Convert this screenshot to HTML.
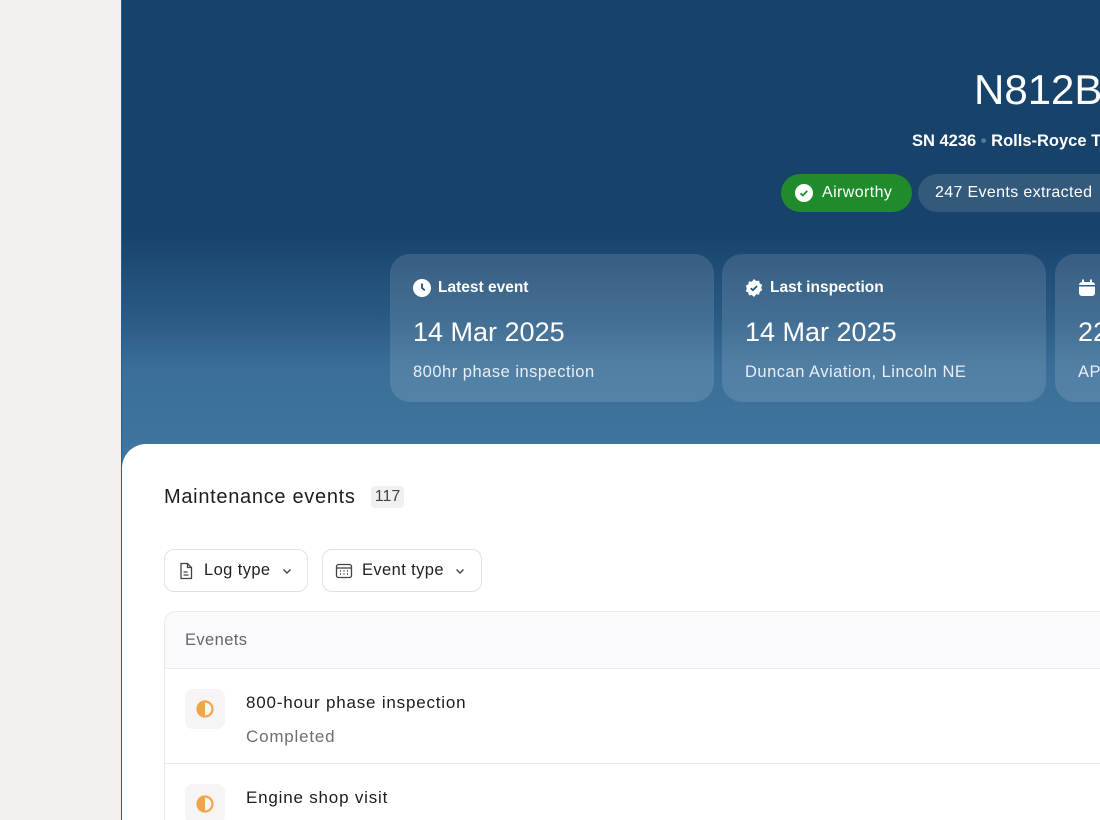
<!DOCTYPE html>
<html style="overflow:hidden"><head><style>
*{margin:0;padding:0;box-sizing:border-box}
html,body{width:1100px;height:820px;overflow:hidden}
body{position:relative;background:#f3efee;font-family:"Liberation Sans",sans-serif}
.hero{position:absolute;left:121px;top:0;width:979px;height:820px;background:linear-gradient(180deg,#17426a 0px,#17426a 230px,#2a5b85 320px,#3b6f99 370px,#3e749d 445px);border-left:1px solid #2a5e8e;overflow:hidden}
.t{position:absolute;color:#fff;white-space:nowrap}
.card{position:absolute;top:254px;height:148px;width:324px;border-radius:20px;background:rgba(255,255,255,0.12)}
.card .h{position:absolute;left:23px;top:25px;font-size:15.5px;font-weight:bold;color:#fff;display:flex;align-items:center;gap:7px}
.card .d{position:absolute;left:23px;top:63px;font-size:27px;color:#fff}
.card .s{position:absolute;left:23px;top:109px;font-size:16.5px;color:#e8eef5;letter-spacing:0.5px}
.main{position:absolute;left:122px;top:444px;width:978px;height:376px;background:#fff;border-top-left-radius:24px;overflow:hidden}
.btn{position:absolute;top:105px;height:43px;border:1px solid #e2e1e6;border-radius:10px;display:flex;align-items:center;font-size:16.5px;color:#222;letter-spacing:0.4px}
.tbl{position:absolute;left:42px;top:167px;width:960px;height:300px;border:1px solid #ebeaee;border-radius:12px;overflow:hidden}
.row{position:absolute;left:0;width:100%;height:96px;border-top:1px solid #ebeaee}
.ic{position:absolute;left:20px;top:20px;width:40px;height:40px;border-radius:8px;background:#f6f4f4;display:flex;align-items:center;justify-content:center}
.rt{position:absolute;left:81px;font-size:17px;letter-spacing:0.8px}
</style></head><body>
<div class="hero">
<div class="t" style="left:852px;top:66px;font-size:42px">N812BA</div>
<div class="t" style="left:790px;top:132px;font-size:16.5px;font-weight:bold">SN 4236 <span style="color:#5d7a95">•</span> Rolls-Royce T</div>
<div class="t" style="left:659px;top:174px;width:131px;height:38px;border-radius:19px;background:#1f8b2b;font-size:16px;letter-spacing:0.4px;display:flex;align-items:center;padding-left:14px;gap:9px">
<svg width="18" height="18" viewBox="0 0 18 18"><circle cx="9" cy="9" r="9" fill="#fff"/><path d="M5.5 9.3l2.3 2.2 4.5-4.6" stroke="#1f8b2b" stroke-width="1.8" fill="none"/></svg>Airworthy</div>
<div class="t" style="left:796px;top:174px;width:200px;height:38px;border-radius:19px;background:rgba(255,255,255,0.12);font-size:16px;letter-spacing:0.35px;display:flex;align-items:center;padding-left:17px">247 Events extracted</div>
<div class="card" style="left:268px"><div class="h"><svg width="18" height="18" viewBox="0 0 18 18"><circle cx="9" cy="9" r="9" fill="#fff"/><path d="M9 4.5V9l2.8 2.3" stroke="#23507a" stroke-width="1.8" fill="none"/></svg>Latest event</div><div class="d">14 Mar 2025</div><div class="s">800hr phase inspection</div></div>
<div class="card" style="left:600px"><div class="h"><svg width="18" height="18" viewBox="0 0 18 18"><path d="M9 0l2.2 2 2.9-.4.6 2.9 2.6 1.4-1.2 2.7 1.2 2.7-2.6 1.4-.6 2.9-2.9-.4L9 18l-2.2-2-2.9.4-.6-2.9L.7 12.1 1.9 9.4.7 6.7l2.6-1.4.6-2.9 2.9.4z" fill="#fff"/><path d="M5.8 9.2l2.2 2 4-4.2" stroke="#23507a" stroke-width="1.7" fill="none"/></svg>Last inspection</div><div class="d">14 Mar 2025</div><div class="s">Duncan Aviation, Lincoln NE</div></div>
<div class="card" style="left:933px"><div class="h"><svg width="18" height="18" viewBox="0 0 18 18"><rect x="1" y="3" width="16" height="14" rx="3" fill="#fff"/><rect x="4" y="0.5" width="2" height="4" fill="#fff"/><rect x="12" y="0.5" width="2" height="4" fill="#fff"/><rect x="1" y="6" width="16" height="1.5" fill="#2b5a84"/></svg>Next due</div><div class="d">22 Jun 2025</div><div class="s">APU inspection</div></div>
</div>
<div class="main">
<div style="position:absolute;left:42px;top:42px;font-size:20px;color:#1d1d1f;letter-spacing:0.7px">Maintenance events</div>
<div style="position:absolute;left:249px;top:42px;width:33px;height:22px;background:#f0eff1;border-radius:4px;font-size:16px;color:#444;text-align:center;line-height:22px">117</div>
<div class="btn" style="left:42px;width:144px;padding-left:12px">
<svg width="18" height="18" viewBox="0 0 18 18" fill="none" stroke="#444" stroke-width="1.3"><path d="M4 1.5h6.5L14.5 5.5V16.5H4z"/><path d="M10.5 1.5v4h4M6.5 10h4M6.5 13h5"/></svg>
<span style="margin-left:9px">Log type</span><svg style="margin-left:10px" width="12" height="12" viewBox="0 0 12 12"><path d="M2.5 4.5l3.5 3.5 3.5-3.5" stroke="#444" stroke-width="1.4" fill="none"/></svg></div>
<div class="btn" style="left:200px;width:160px;padding-left:12px">
<svg width="18" height="18" viewBox="0 0 18 18" fill="none" stroke="#444" stroke-width="1.3"><rect x="1.5" y="2.5" width="15" height="13" rx="2"/><path d="M1.5 6h15"/><path d="M5 9h1M8.5 9h1M12 9h1M5 12h1M8.5 12h1M12 12h1" stroke-width="1.5"/></svg>
<span style="margin-left:9px">Event type</span><svg style="margin-left:10px" width="12" height="12" viewBox="0 0 12 12"><path d="M2.5 4.5l3.5 3.5 3.5-3.5" stroke="#444" stroke-width="1.4" fill="none"/></svg></div>
<div class="tbl">
<div style="position:absolute;left:0;top:0;width:100%;height:56px;background:#faf9fb;font-size:16.5px;color:#666;padding:19px 0 0 20px;letter-spacing:0.4px">Evenets</div>
<div class="row" style="top:56px"><div class="ic"><svg width="20" height="20" viewBox="0 0 20 20"><circle cx="10" cy="10" r="7.5" fill="none" stroke="#eea64a" stroke-width="2.2"/><path d="M10 2.5a7.5 7.5 0 0 0 0 15z" fill="#eea64a"/></svg></div>
<div class="rt" style="top:24px;color:#1d1d1f">800-hour phase inspection</div>
<div class="rt" style="top:58px;color:#6f6f6f">Completed</div></div>
<div class="row" style="top:151px"><div class="ic"><svg width="20" height="20" viewBox="0 0 20 20"><circle cx="10" cy="10" r="7.5" fill="none" stroke="#eea64a" stroke-width="2.2"/><path d="M10 2.5a7.5 7.5 0 0 0 0 15z" fill="#eea64a"/></svg></div>
<div class="rt" style="top:24px;color:#1d1d1f">Engine shop visit</div></div>
</div>
</div>
</body></html>
